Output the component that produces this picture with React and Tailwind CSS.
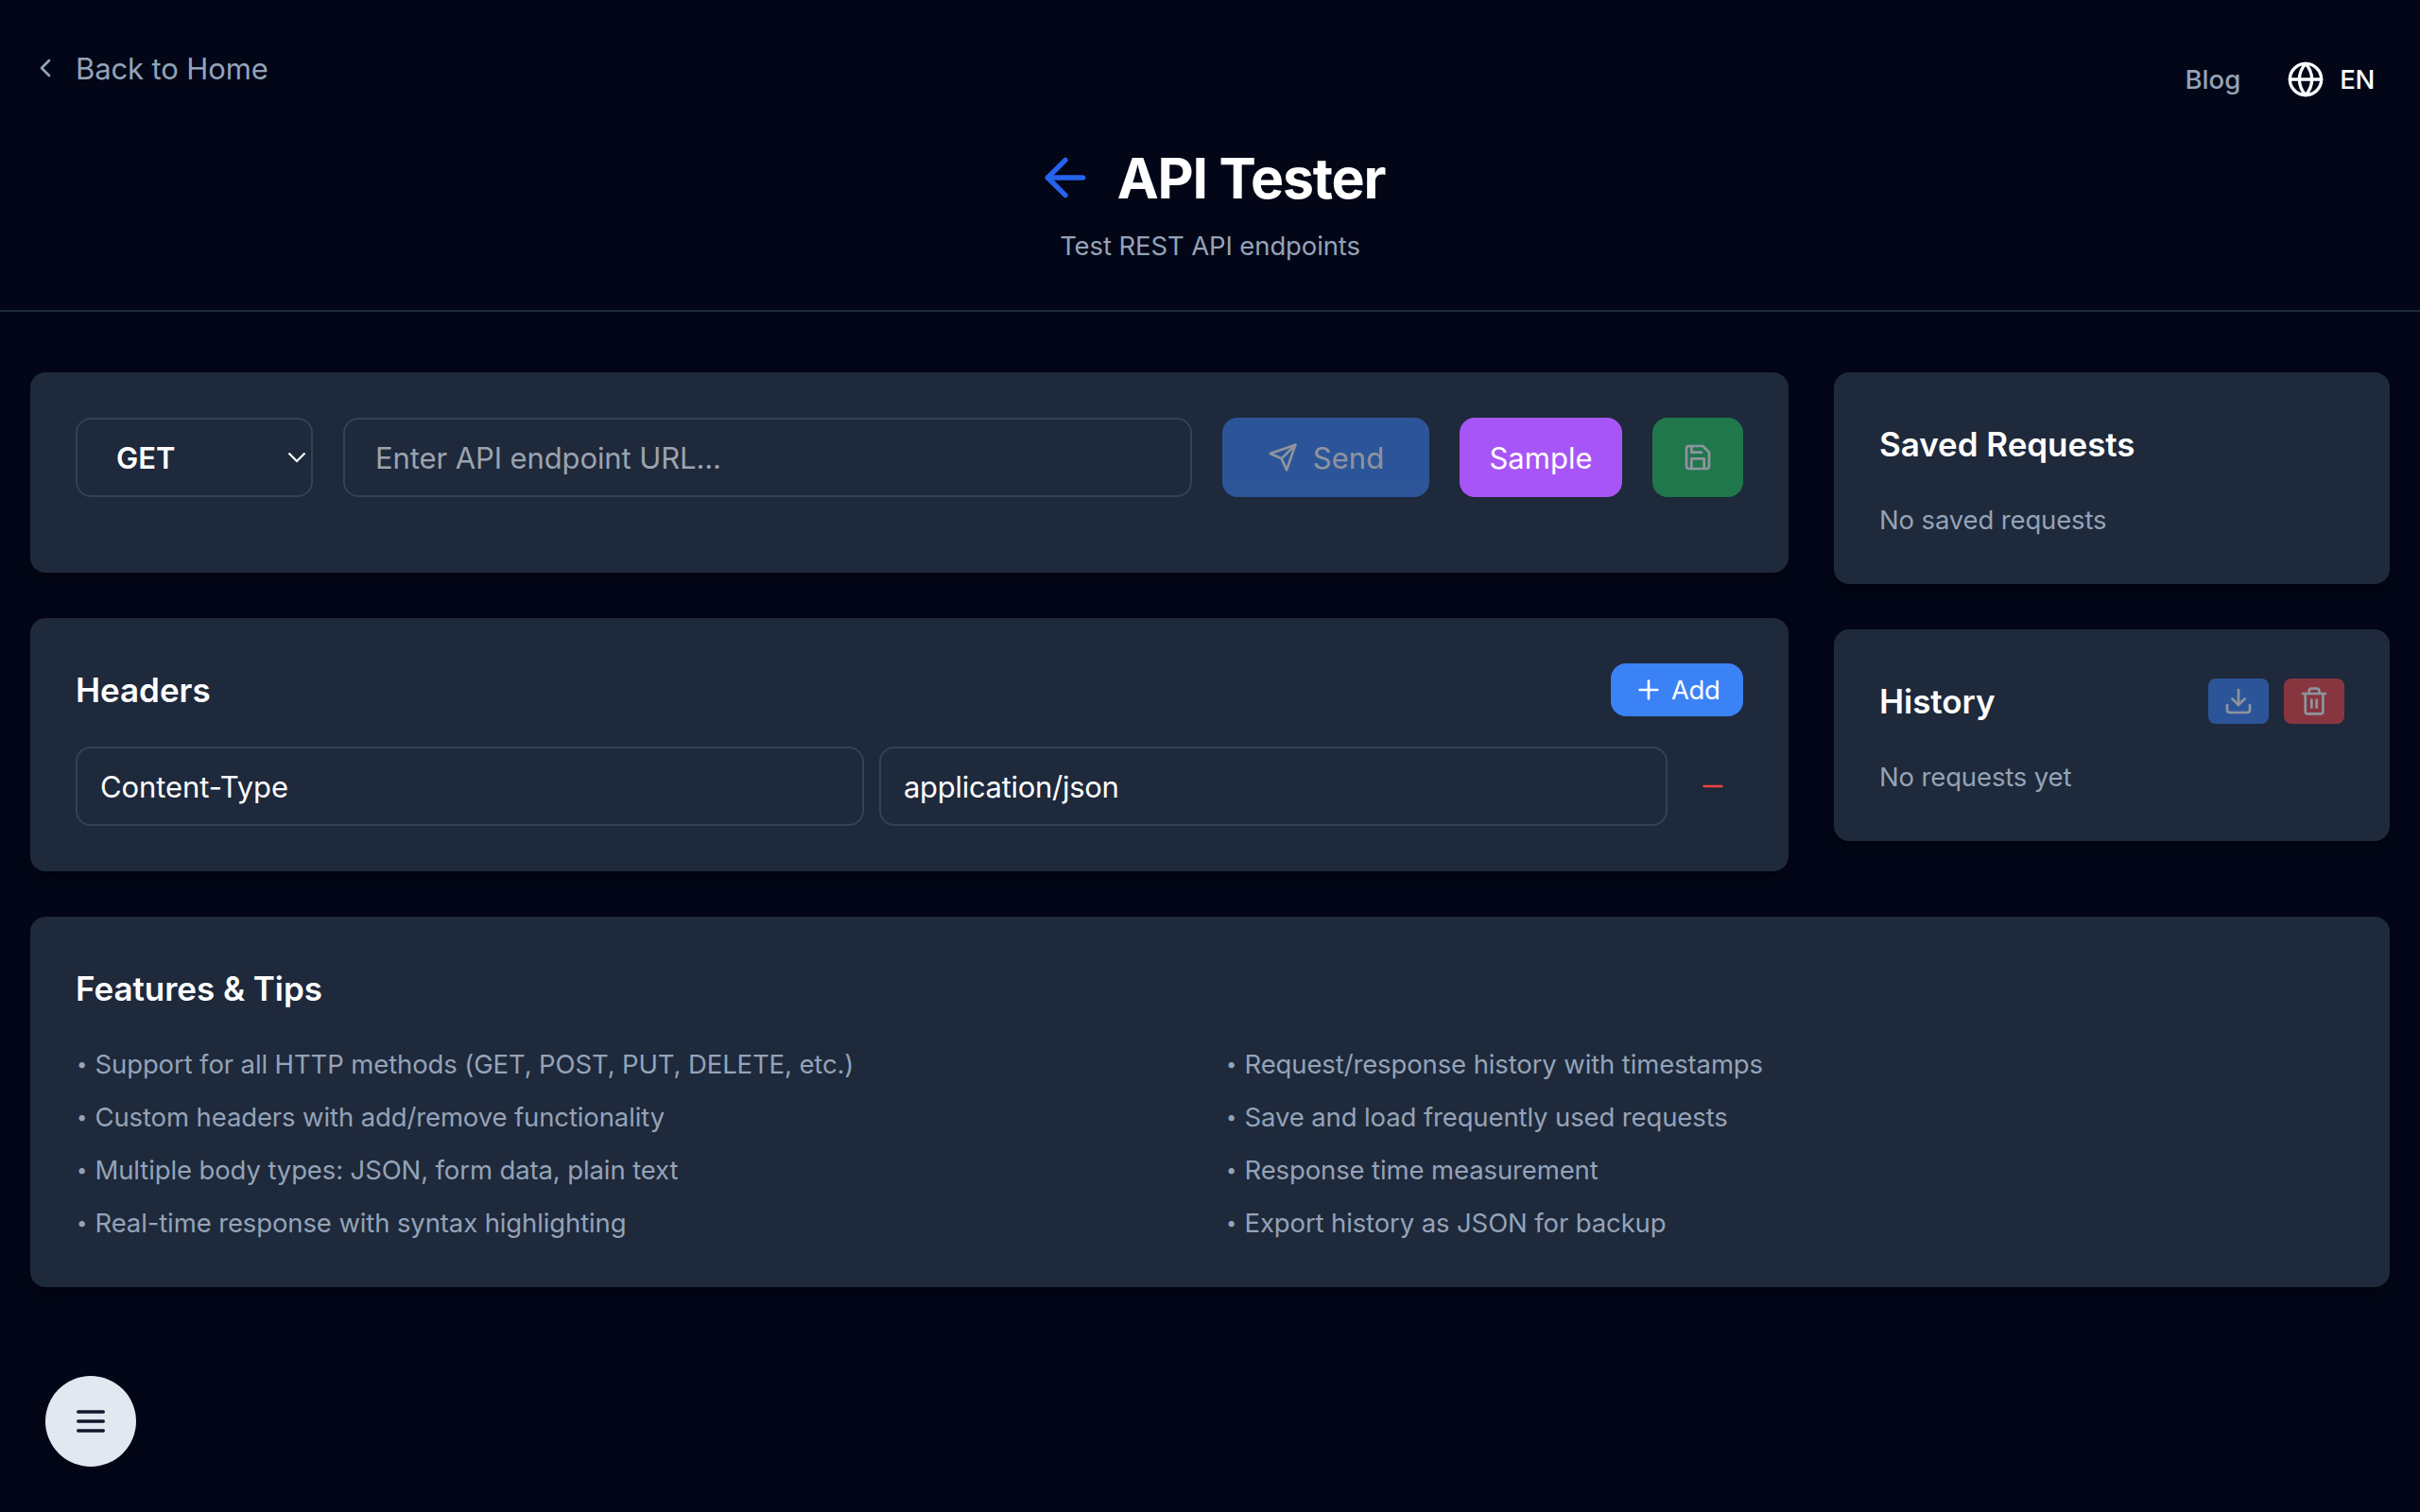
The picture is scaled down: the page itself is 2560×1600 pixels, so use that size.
import React from "react";
import {
  FiArrowLeft,
  FiChevronLeft,
  FiDownload,
  FiGlobe,
  FiMinus,
  FiPlus,
  FiSave,
  FiSend,
  FiTrash2,
} from "react-icons/fi";

const leftTips = [
  "Support for all HTTP methods (GET, POST, PUT, DELETE, etc.)",
  "Custom headers with add/remove functionality",
  "Multiple body types: JSON, form data, plain text",
  "Real-time response with syntax highlighting",
];

const rightTips = [
  "Request/response history with timestamps",
  "Save and load frequently used requests",
  "Response time measurement",
  "Export history as JSON for backup",
];

function Card({ children, className = "" }) {
  return (
    <section
      className={`bg-[#1e293b] rounded-2xl p-12 shadow-[0_8px_12px_-2px_rgba(0,0,0,0.4)] ${className}`}
    >
      {children}
    </section>
  );
}

function CardTitle({ children }) {
  return (
    <h2 className="text-[35px] leading-[56px] tracking-[-0.04px] font-semibold text-white">
      {children}
    </h2>
  );
}

function EmptyNote({ children }) {
  return (
    <p className="mt-8 text-[27.5px] leading-10 tracking-[-0.14px] text-[#94a3b8]">
      {children}
    </p>
  );
}

function TipList({ items }) {
  return (
    <ul className="flex flex-col gap-4">
      {items.map((tip) => (
        <li
          key={tip}
          className="flex h-10 text-[27.5px] leading-10 tracking-[-0.12px] text-[#94a3b8]"
        >
          <span className="w-[20.5px] pl-px text-[20px] leading-[41px]">•</span>
          <span>{tip}</span>
        </li>
      ))}
    </ul>
  );
}

function App() {
  return (
    <div className="min-h-screen bg-[#020617] font-['Inter',sans-serif] text-white">
      <header className="relative h-[330px] border-b-2 border-[#1e293b] pt-[160px]">
        <a className="absolute left-8 top-12 flex h-12 items-center gap-4 text-[#94a3b8]">
          <FiChevronLeft className="size-8" />
          <span className="pt-0.5 text-[31px] leading-[46px] tracking-[-0.12px]">Back to Home</span>
        </a>
        <nav className="absolute right-12 top-16 flex h-10 items-center text-[27.5px] leading-10 font-medium">
          <a className="mr-[49px] text-[#94a3b8]">Blog</a>
          <FiGlobe className="mr-4 size-10" />
          <span className="tracking-[-0.3px]">EN</span>
        </nav>

        <div className="flex h-14 items-center justify-center gap-[23px]">
          <FiArrowLeft className="size-16 text-[#2563eb]" />
          <h1 className="pt-0.5 text-[59px] leading-[72px] tracking-[-1.23px] font-bold">
            API Tester
          </h1>
        </div>
        <p className="mt-6 text-center text-[27.5px] leading-10 tracking-[-0.12px] text-[#94a3b8]">
          Test REST API endpoints
        </p>
      </header>

      <main className="px-8 pt-16">
        <div className="grid grid-cols-4 items-start gap-12">
          <div className="col-span-3 flex flex-col gap-12">
            <Card>
              <div className="mb-8 flex h-[84px] gap-8 text-[31px] leading-[46px]">
                <button className="flex w-[251px] items-center justify-between rounded-2xl border-2 border-[#314354] pl-10 pr-[5px] font-semibold">
                  <span className="pt-0.5 pl-px">GET</span>
                  <svg className="h-3 w-5" viewBox="0 0 20 12" fill="none" stroke="currentColor" strokeWidth="2.2">
                    <path d="M1.5 1.5 10 10l8.5-8.5" />
                  </svg>
                </button>
                <input
                  className="min-w-0 flex-1 rounded-2xl border-2 border-[#314354] px-8 pt-0.5 tracking-[-0.1px] outline-none placeholder:text-[#9ca3af]"
                  placeholder="Enter API endpoint URL..."
                />
                <button className="flex w-[219px] items-center justify-center gap-4 rounded-2xl bg-[#3b82f6] opacity-50">
                  <FiSend className="size-8" />
                  <span className="pt-0.5">Send</span>
                </button>
                <button className="w-[172px] rounded-2xl bg-[#a855f7] pt-0.5">Sample</button>
                <button className="flex w-24 items-center justify-center rounded-2xl bg-[#22c55e] opacity-50">
                  <FiSave className="size-8" />
                </button>
              </div>
            </Card>

            <Card>
              <div className="mb-8 flex items-center justify-between">
                <CardTitle>Headers</CardTitle>
                <button className="flex h-14 w-[140px] items-center gap-2 rounded-2xl bg-[#3b82f6] pl-6 text-[27.5px] leading-10 tracking-[-0.4px]">
                  <FiPlus className="size-8" />
                  <span>Add</span>
                </button>
              </div>
              <div className="flex h-[84px] gap-4 text-[31px] leading-[46px]">
                <input
                  className="min-w-0 flex-1 rounded-2xl border-2 border-[#314354] px-6 pt-0.5 tracking-[-0.08px] outline-none"
                  defaultValue="Content-Type"
                />
                <input
                  className="min-w-0 flex-1 rounded-2xl border-2 border-[#314354] px-6 pt-0.5 tracking-[-0.3px] outline-none"
                  defaultValue="application/json"
                />
                <button className="flex w-16 items-center justify-center text-[#ef4444]">
                  <FiMinus className="size-8" />
                </button>
              </div>
            </Card>
          </div>

          <aside className="flex flex-col gap-12">
            <Card>
              <CardTitle>Saved Requests</CardTitle>
              <EmptyNote>No saved requests</EmptyNote>
            </Card>
            <Card>
              <div className="flex items-center justify-between">
                <CardTitle>History</CardTitle>
                <div className="flex gap-4">
                  <button className="rounded-lg bg-[#3b82f6] px-4 py-2 opacity-50">
                    <FiDownload className="size-8" />
                  </button>
                  <button className="rounded-lg bg-[#ef4444] px-4 py-2 opacity-50">
                    <FiTrash2 className="size-8" />
                  </button>
                </div>
              </div>
              <EmptyNote>No requests yet</EmptyNote>
            </Card>
          </aside>
        </div>

        <Card className="mt-12">
          <CardTitle>Features &amp; Tips</CardTitle>
          <div className="mt-8 grid grid-cols-2 gap-8">
            <TipList items={leftTips} />
            <TipList items={rightTips} />
          </div>
        </Card>
      </main>

      {/* floating menu button */}
      <button className="fixed bottom-12 left-12 flex size-24 items-center justify-center rounded-full bg-[#e2e8f0] text-[#0f172a] shadow-lg">
        <svg className="size-10" viewBox="0 0 24 24" fill="none" stroke="currentColor" strokeWidth="2" strokeLinecap="round">
          <path d="M4 6h16M4 12h16M4 18h16" />
        </svg>
      </button>
    </div>
  );
}

export default App;
